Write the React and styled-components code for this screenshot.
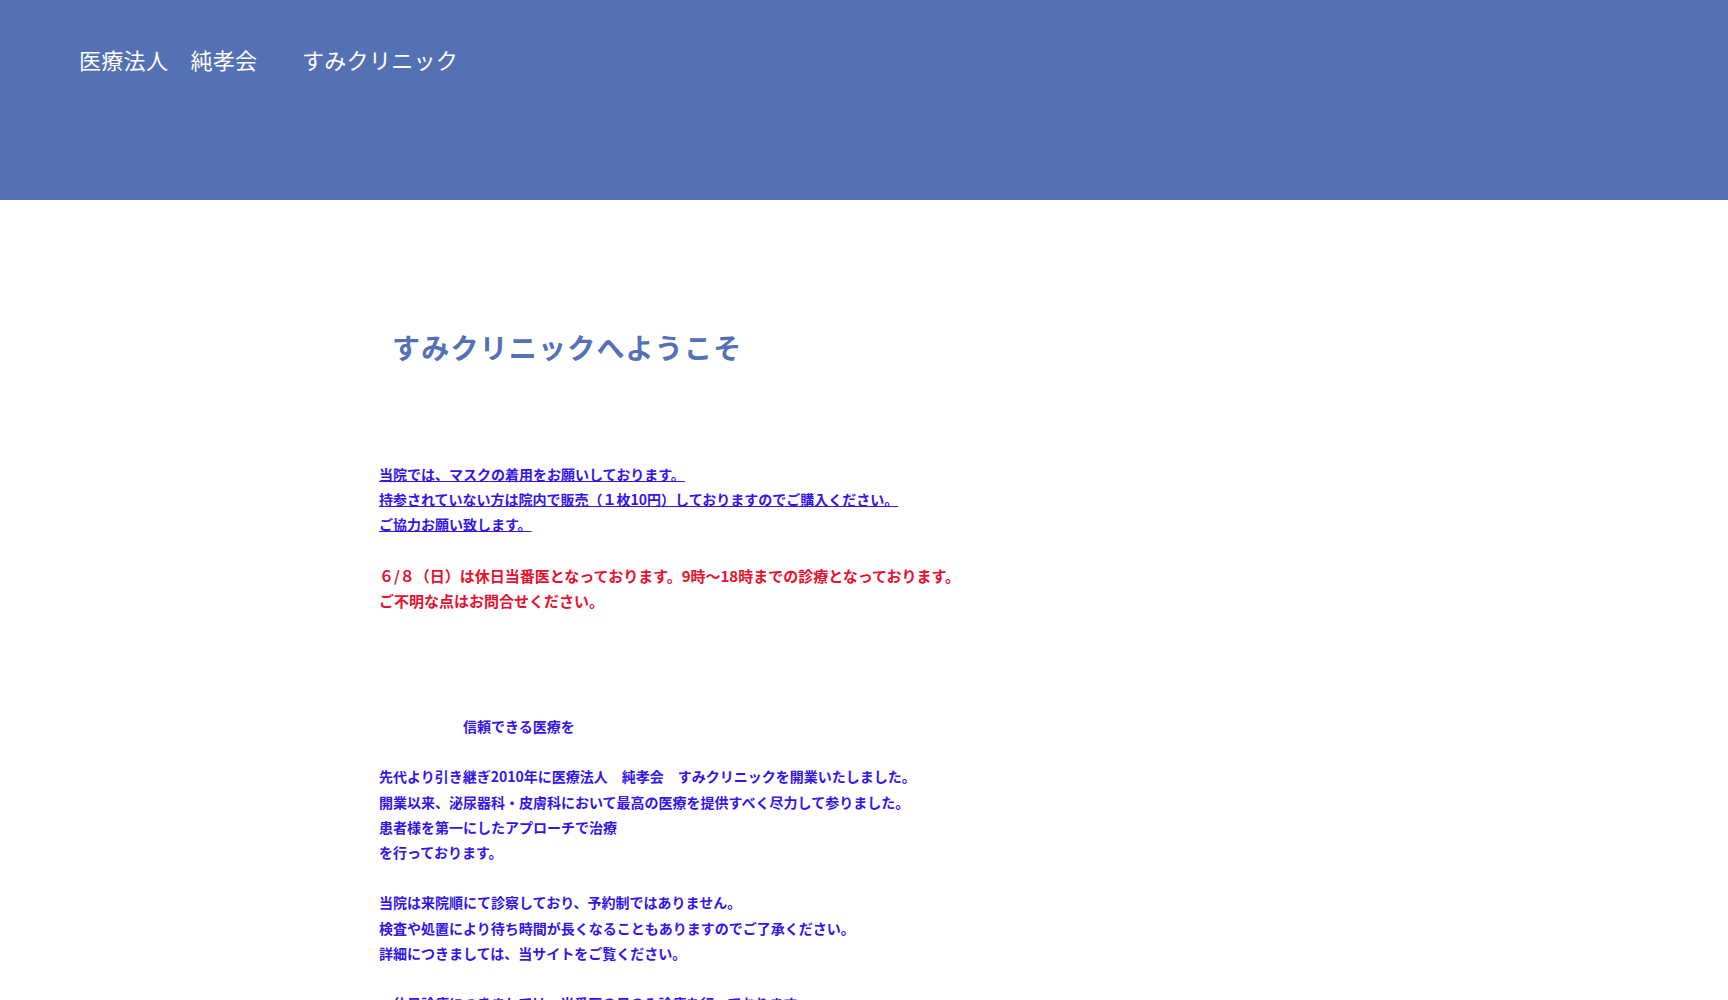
import React from "react";
import styled, { createGlobalStyle } from "styled-components";

const GlobalStyle = createGlobalStyle`
  body {
    margin: 0;
    background: #ffffff;
    font-family: "Noto Sans CJK JP", "Noto Sans", sans-serif;
  }
`;

const notice = [
  "当院では、マスクの着用をお願いしております。",
  "持参されていない方は院内で販売（１枚10円）しておりますのでご購入ください。",
  "ご協力お願い致します。",
];

const urgent = [
  "６/８（日）は休日当番医となっております。9時～18時までの診療となっております。",
  "ご不明な点はお問合せください。",
];

const about = [
  "先代より引き継ぎ2010年に医療法人　純孝会　すみクリニックを開業いたしました。",
  "開業以来、泌尿器科・皮膚科において最高の医療を提供すべく尽力して参りました。",
  "患者様を第一にしたアプローチで治療",
  "を行っております。",
];

const visit = [
  "当院は来院順にて診察しており、予約制ではありません。",
  "検査や処置により待ち時間が長くなることもありますのでご了承ください。",
  "詳細につきましては、当サイトをご覧ください。",
];

const App = () => {
  return (
    <>
      <GlobalStyle />
      <Header>
        <SiteName>医療法人　純孝会　　すみクリニック</SiteName>
      </Header>
      <Main>
        <Title>すみクリニックへようこそ</Title>
        <Body>
          {notice.map((t) => (
            <Line key={t}>
              <Link href="#">{t}</Link>
            </Line>
          ))}
          <Blank />
          {urgent.map((t) => (
            <Line key={t} $red>
              {t}
            </Line>
          ))}
          <Blank $rows={4} />
          <Line $indent>信頼できる医療を</Line>
          <Blank />
          {about.map((t) => (
            <Line key={t}>{t}</Line>
          ))}
          <Blank />
          {visit.map((t) => (
            <Line key={t}>{t}</Line>
          ))}
          <Blank />
          <Line>・休日診療につきましては、当番医の日のみ診療を行っております。</Line>
        </Body>
      </Main>
    </>
  );
};

const Header = styled.header`
  height: 200px;
  background: #5571b5;
  padding: 43px 0 0 79px;
  box-sizing: border-box;
`;

const SiteName = styled.div`
  color: #ffffff;
  font-size: 22px;
  line-height: 33px;
  font-weight: 400;
  letter-spacing: 0.3px;
`;

const Main = styled.main`
  padding: 127px 0 0 379px;
  height: 800px;
  overflow: hidden;
  box-sizing: border-box;
`;

const Title = styled.h1`
  margin: 0 0 95px 13px;
  font-size: 28px;
  line-height: 40px;
  font-weight: 700;
  color: #5571b5;
  letter-spacing: 1.2px;
`;

const Body = styled.div`
  font-size: 14px;
  line-height: 25.2px;
  font-weight: 700;
  color: #3414ee;
`;

const Line = styled.div`
  white-space: nowrap;
  color: ${(p) => (p.$red ? "#e8102e" : "#3414ee")};
  font-size: ${(p) => (p.$red ? "15px" : "14px")};
  padding-left: ${(p) => (p.$indent ? "84px" : "0")};
`;

const Link = styled.a`
  color: #3414ee;
  text-decoration: underline;
`;

const Blank = styled.div`
  height: ${(p) => (p.$rows || 1) * 25.2}px;
`;

export default App;
